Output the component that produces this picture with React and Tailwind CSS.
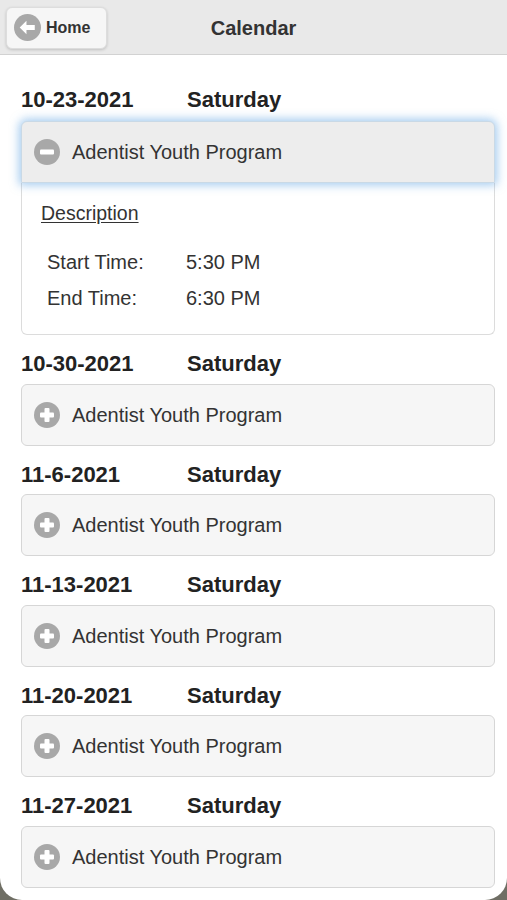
import React, { useState } from 'react';

const EVENTS = [
  { date: '10-23-2021', day: 'Saturday', title: 'Adentist Youth Program', start: '5:30 PM', end: '6:30 PM' },
  { date: '10-30-2021', day: 'Saturday', title: 'Adentist Youth Program', start: '5:30 PM', end: '6:30 PM' },
  { date: '11-6-2021', day: 'Saturday', title: 'Adentist Youth Program', start: '5:30 PM', end: '6:30 PM' },
  { date: '11-13-2021', day: 'Saturday', title: 'Adentist Youth Program', start: '5:30 PM', end: '6:30 PM' },
  { date: '11-20-2021', day: 'Saturday', title: 'Adentist Youth Program', start: '5:30 PM', end: '6:30 PM' },
  { date: '11-27-2021', day: 'Saturday', title: 'Adentist Youth Program', start: '5:30 PM', end: '6:30 PM' },
];

// Round gray icon with a white plus / minus, like jQuery Mobile's collapsible icons
function ToggleIcon({ open }) {
  return (
    <svg width="26" height="26" viewBox="0 0 26 26" className="shrink-0">
      <circle cx="13" cy="13" r="13" fill="#a8a8a8" />
      <rect x="6" y="10.5" width="14" height="5" rx="1" fill="#fff" />
      {!open && <rect x="10.5" y="6" width="5" height="14" rx="1" fill="#fff" />}
    </svg>
  );
}

function BackIcon() {
  return (
    <svg width="27" height="27" viewBox="0 0 26 26" className="shrink-0">
      <circle cx="13" cy="13" r="13" fill="#a8a8a8" />
      <path d="M5.5 13 L12 6.5 L12 10.5 L20 10.5 L20 15.5 L12 15.5 L12 19.5 Z" fill="#fff" />
    </svg>
  );
}

function EventBlock({ event, open, onToggle, first }) {
  return (
    <div>
      <div className={`flex items-center pl-[21px] text-[22px] leading-[22px] font-bold text-[#222] ${first ? 'pt-[34px] pb-[10px]' : 'pt-[18px] pb-[8.5px]'}`}>
        <span className="w-[166px]">{event.date}</span>
        <span>{event.day}</span>
      </div>
      <div className="ml-[21px] mr-[12px]">
        <button
          onClick={onToggle}
          className={`w-full h-[62px] flex items-center gap-[12px] pl-[12px] text-left text-[20px] text-[#333] border ${
            open
              ? 'relative bg-[#ededed] border-[#c9d9e6] rounded-t-md shadow-[0_0_10px_2px_rgba(90,160,225,0.55)]'
              : 'bg-[#f6f6f6] border-[#d6d6d6] rounded-md'
          }`}
        >
          <ToggleIcon open={open} />
          <span>{event.title}</span>
        </button>
        {open && (
          <div className="h-[152px] bg-white border border-t-0 border-[#dcdcdc] rounded-b-md pl-[19px] pt-[19px] text-[20px] text-[#333]">
            <div className="underline underline-offset-2 leading-[22px] text-[19.5px]">Description</div>
            <div className="mt-[27px] pl-[6px] flex flex-col gap-[14px] leading-[22px]">
              <div className="flex">
                <span className="w-[139px]">Start Time:</span>
                <span>{event.start}</span>
              </div>
              <div className="flex">
                <span className="w-[139px]">End Time:</span>
                <span>{event.end}</span>
              </div>
            </div>
          </div>
        )}
      </div>
    </div>
  );
}

export default function App() {
  const [openIndex, setOpenIndex] = useState(0);

  return (
    <div className="h-[900px] overflow-hidden bg-[#6f6e64]" style={{ fontFamily: '"Liberation Sans", Arial, sans-serif' }}>
      <div className="h-full bg-white rounded-b-[22px] overflow-hidden">
        {/* Header bar */}
        <div className="h-[55px] bg-[#e9e9e9] border-b border-[#d2d2d2] flex items-center relative">
          <button className="ml-[6px] mt-[1px] w-[101px] h-[42px] flex items-center gap-[5px] pl-[7px] bg-[#f6f6f6] border border-[#dddddd] rounded-md shadow-[0_1px_3px_rgba(0,0,0,0.18)] text-[16px] font-bold text-[#333]">
            <BackIcon />
            <span className="mt-[1px]">Home</span>
          </button>
          <div className="absolute inset-x-0 top-[16px] leading-[24px] text-center text-[20px] font-bold text-[#333] pointer-events-none">
            Calendar
          </div>
        </div>

        {/* Event list */}
        <div>
          {EVENTS.map((event, i) => (
            <EventBlock
              key={event.date}
              event={event}
              first={i === 0}
              open={openIndex === i}
              onToggle={() => setOpenIndex(openIndex === i ? -1 : i)}
            />
          ))}
        </div>
      </div>
    </div>
  );
}
